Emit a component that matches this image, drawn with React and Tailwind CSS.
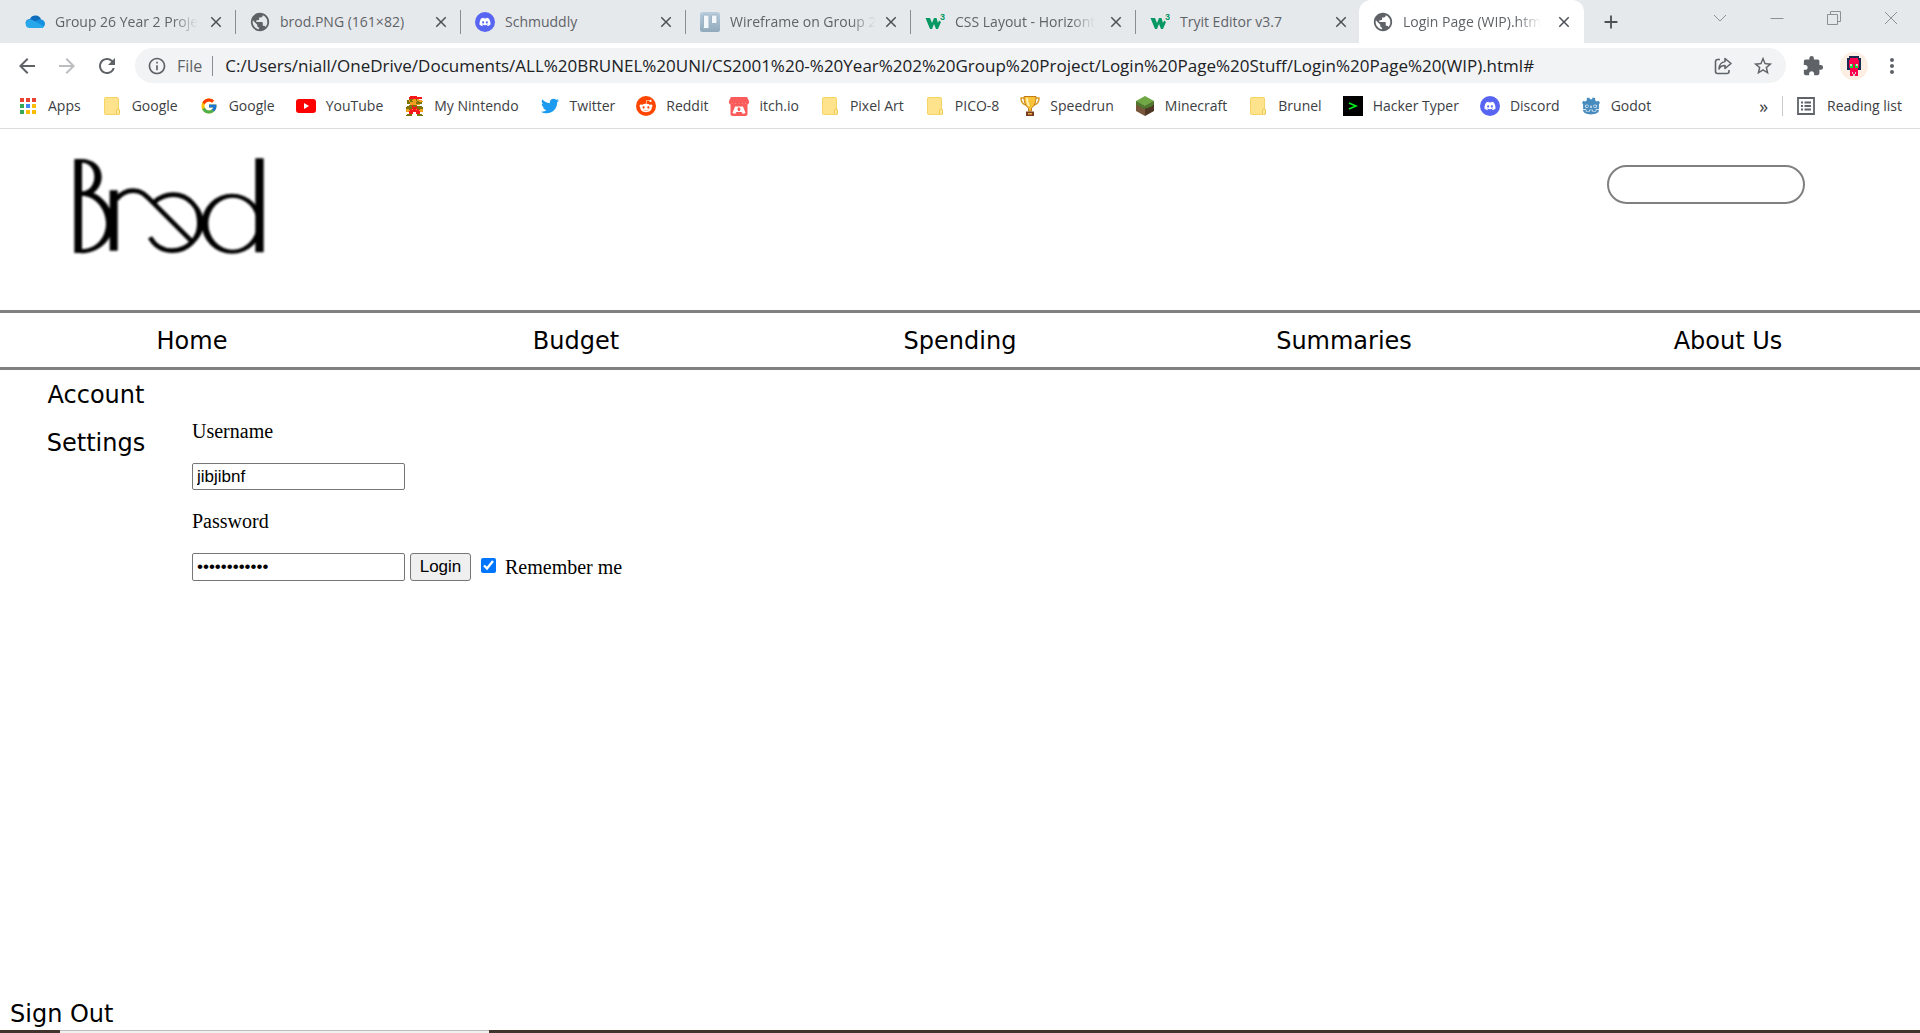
import React from "react";
import { FaDiscord, FaTwitter, FaRedditAlien } from "react-icons/fa";
import { FcGoogle } from "react-icons/fc";
import { SiGodotengine } from "react-icons/si";
import { MdPublic, MdExtension, MdMoreVert, MdStarBorder, MdArrowBack, MdArrowForward, MdRefresh, MdInfoOutline, MdClose, MdAdd } from "react-icons/md";

const Globe = () => <MdPublic className="size-[22px] shrink-0 text-[#5f6368]" />;

const Discord = () => (
  <span className="flex size-5 items-center justify-center rounded-full bg-[#5865f2]">
    <FaDiscord className="size-3 text-white" />
  </span>
);

const OneDrive = () => (
  <svg viewBox="0 0 20 13" className="h-[13px] w-5">
    <path d="M5 4C6 1 9 0 11.500 .5c2.500.5 4 2 4.500 4L10 9 1 9C0 7 1.500 4 5 4z" fill="#0f6cbd" />
    <path d="M15.500 4.500c2.500 0 4.500 1.700 4.500 4.200S18 13 16 13H4L9 7c2-1.500 4-2.500 6.500-2.500z" fill="#1490df" />
    <path d="M1 7c1-2.500 4-3.500 6.500-2L19 11.500C18.500 12.500 17 13 16 13H4.500C1.500 13 0 10 1 7z" fill="#28a8ea" />
  </svg>
);

const Trello = () => (
  <svg viewBox="0 0 20 20" className="size-5">
    <defs>
      <linearGradient id="board" x1="0" y1="0" x2="0" y2="1">
        <stop offset="0" stopColor="#b9cddd" />
        <stop offset="1" stopColor="#8fa9bb" />
      </linearGradient>
    </defs>
    <rect width="20" height="20" rx="2.500" fill="url(#board)" />
    <rect x="3.500" y="3" width="5.500" height="13.500" rx="1" fill="#f4f8fb" stroke="#9db2c4" />
    <rect x="11.500" y="3" width="5.500" height="8.500" rx="1" fill="#f4f8fb" stroke="#9db2c4" />
  </svg>
);

const W3 = () => (
  <svg viewBox="0 0 20 20" className="size-5">
    <path d="M.5 6H5l2 5 2-5h2.500l1.500 5 1-2.500L16 10l-3 7h-2l-2-5-2 5H5z" fill="#059862" />
    <text x="15" y="8" fontSize="9" fontWeight="700" fontFamily="Liberation Sans, sans-serif" fill="#059862">3</text>
  </svg>
);

const Folder = () => (
  <svg viewBox="0 0 16 18" className="h-[18px] w-4">
    <path d="M1.500.5h12a1 1 0 0 1 1 1V12l1 1v3.500a1 1 0 0 1-1 1h-13a1 1 0 0 1-1-1v-15a1 1 0 0 1 1-1z" fill="#ffe38c" stroke="#f5d365" />
    <path d="M12.500 17v-3.500a1.500 1.500 0 0 1 3 0V16q0 1.500-1.500 1.500" fill="#ffe9a3" stroke="#efc850" />
  </svg>
);

const appColors = ["#ea4335", "#ea4335", "#ea4335", "#34a853", "#4285f4", "#fbbc05", "#34a853", "#fbbc05", "#fbbc05"];
const Apps = () => (
  <span className="grid grid-cols-3 gap-0.5">
    {appColors.map((c, i) => (
      <span key={i} className="size-1" style={{ backgroundColor: c }} />
    ))}
  </span>
);

const YouTube = () => (
  <svg viewBox="0 0 20 14" className="h-3.5 w-5">
    <rect width="20" height="14" rx="3" fill="#f00" />
    <path d="M8 4l5 3-5 3z" fill="#fff" />
  </svg>
);

const PixelArt = ({ rows, colors, className }) => (
  <svg viewBox={`0 0 ${rows[0].length} ${rows.length}`} preserveAspectRatio="none" shapeRendering="crispEdges" className={className}>
    {rows.flatMap((row, y) =>
      [...row].map((ch, x) => (colors[ch] ? <rect key={`${x}-${y}`} x={x} y={y} width="1" height="1" fill={colors[ch]} /> : null))
    )}
  </svg>
);

const marioRows = [
  "...rrrrr....",
  "..rrrrrrrrr.",
  "..bbbssbs...",
  ".bsbsssbsss.",
  ".bsbbsssbsss",
  ".bbssssbbbb.",
  "...sssssss..",
  "..bbrbbb....",
  ".bbbrbbrbbb.",
  "bbbbrrrrbbbb",
  "ssbrsrrsrbss",
  "sssrrrrrrsss",
  "ssrrrrrrrrss",
  "..rrr..rrr..",
  ".bbb....bbb.",
  "bbbb....bbbb",
];
const Mario = () => <PixelArt rows={marioRows} colors={{ r: "#f8181c", b: "#7d7408", s: "#f0a020" }} className="h-5 w-[17px]" />;

const Reddit = () => (
  <span className="flex size-5 items-center justify-center rounded-full bg-[#ff4500]">
    <FaRedditAlien className="size-3.5 text-white" />
  </span>
);

const Itch = () => (
  <svg viewBox="0 0 20 19" className="h-[19px] w-5">
    <path d="M2 0h16l2 4v2q-1.500 2.500-3.300.5Q15 8.500 13.300 6.500 11.700 8.500 10 6.500 8.300 8.500 6.700 6.500 5 8.500 3.300 6.500 1.500 8.500 0 6V4z" fill="#fa5c5c" />
    <path d="M1.500 7h17v10q0 2-2 2h-13q-2 0-2-2z" fill="#fa5c5c" />
    <path d="M6 9.500h8l2.500 6.500-2.500 1-1.500-2h-5L6 17l-2.500-1z" fill="#fff" />
    <path d="M10 10l2.200 2.500H11V14H9v-1.500H7.800z" fill="#fa5c5c" />
  </svg>
);

const Trophy = () => (
  <svg viewBox="0 0 20 20" className="size-5">
    <path d="M4.500 2H1q0 6 5 7M15.500 2H19q0 6-5 7" fill="none" stroke="#d99a20" strokeWidth="1.500" />
    <path d="M4 .5h12q0 9-4.500 11.500V15h-3v-3Q4 9.500 4 .5z" fill="#fbc437" stroke="#c07c18" />
    <path d="M7 2q0 5 2 8" fill="none" stroke="#ffefb0" strokeWidth="2" />
    <path d="M6 15.500h8V20H6z" fill="#7a3b1d" />
    <path d="M8 17h4v1.500H8z" fill="#e8b04a" />
  </svg>
);

const Minecraft = () => (
  <svg viewBox="0 0 18 20" className="h-5 w-[18px]">
    <path d="M9 0l9 5-9 5-9-5z" fill="#6fa844" />
    <path d="M0 5l9 5v10l-9-5z" fill="#79553a" />
    <path d="M18 5l-9 5v10l9-5z" fill="#4f3625" />
    <path d="M0 5l9 5v3l-2-1v1l-2-2v1L3 9.500v1L0 8zM18 5l-9 5v2.500l2-.5v1l2-2 2 0 3-3z" fill="#4d7a2d" />
  </svg>
);

const HackerTyper = () => (
  <span className="flex size-5 items-center justify-center bg-black">
    <svg viewBox="0 0 10 8" className="h-2 w-2.5">
      <path d="M1 1l7 3-7 3" fill="none" stroke="#00f020" strokeWidth="1.800" />
    </svg>
  </span>
);

const Godot = () => <SiGodotengine className="size-[18px] text-[#478cbf]" />;

const avatarRows = [
  ".nnnnnnn.",
  "nnrrrrrnn",
  "nrrrrrrrn",
  "nrrrrrrrn",
  "nrwgrgwrn",
  "nrggrggrn",
  "nnrrrrrnn",
  "..rrrrr..",
  "..rwrwr..",
  "..rrwrr..",
];

const tabs = [
  { icon: <OneDrive />, label: "Group 26 Year 2 Proje", fade: true },
  { icon: <Globe />, label: "brod.PNG (161×82)" },
  { icon: <Discord />, label: "Schmuddly" },
  { icon: <Trello />, label: "Wireframe on Group 2", fade: true },
  { icon: <W3 />, label: "CSS Layout - Horizont", fade: true },
  { icon: <W3 />, label: "Tryit Editor v3.7" },
  { icon: <Globe />, label: "Login Page (WIP).htm", fade: true, active: true },
];

const bookmarks = [
  [<Apps />, "Apps"],
  [<Folder />, "Google"],
  [<FcGoogle className="size-[18px]" />, "Google"],
  [<YouTube />, "YouTube"],
  [<Mario />, "My Nintendo"],
  [<FaTwitter className="size-[18px] text-[#1d9bf0]" />, "Twitter"],
  [<Reddit />, "Reddit"],
  [<Itch />, "itch.io"],
  [<Folder />, "Pixel Art"],
  [<Folder />, "PICO-8"],
  [<Trophy />, "Speedrun"],
  [<Minecraft />, "Minecraft"],
  [<Folder />, "Brunel"],
  [<HackerTyper />, "Hacker Typer"],
  [<Discord />, "Discord"],
  [<Godot />, "Godot"],
];

function Tab({ icon, label, fade, active }) {
  return (
    <div className={`flex w-[225px] items-center pr-[11px] pl-3.5 ${active ? "-ml-0.5 rounded-t-xl bg-white" : ""}`}>
      <button type="button" className="flex min-w-0 flex-1 items-center gap-2.5 text-left">
        <span className="flex size-5 shrink-0 items-center justify-center">{icon}</span>
        <span
          className={`whitespace-nowrap text-[#5f6368] ${fade ? "[mask-image:linear-gradient(to_right,black_82%,transparent)]" : ""}`}
        >
          {label}
        </span>
      </button>
      <button type="button" aria-label={`Close ${label}`} className="shrink-0">
        <MdClose className="size-[18px] text-[#4d5156]" />
      </button>
    </div>
  );
}

function TabStrip() {
  return (
    <div className="flex h-[43px] bg-[#e6e9ec] pl-[11px] text-sm">
      {tabs.map((t, i) => (
        <React.Fragment key={t.label}>
          <Tab {...t} />
          {i < 5 && <span className="z-10 -ml-px h-6 w-px self-center bg-[#8a8d91]" />}
        </React.Fragment>
      ))}
      <button type="button" aria-label="New tab" className="ml-4 self-center">
        <MdAdd className="size-[22px] text-[#4d5156]" />
      </button>
      <div className="ml-auto flex items-center pr-px pb-2">
        {[
          ["Search tabs", "M1 4l6 6 6-6"],
          ["Minimize", "M.5 7.500h13"],
          ["Restore", "M.5 3.500h10v10H.5zM3.500 3.500v-3h10v10h-3"],
          ["Close window", "M1 1l12 12M13 1L1 13"],
        ].map(([name, d]) => (
          <button key={name} type="button" aria-label={name} className="flex w-[57px] justify-center">
            <svg viewBox="0 0 14 14" className="size-3.5" fill="none" stroke="#8d9094">
              <path d={d} />
            </svg>
          </button>
        ))}
      </div>
    </div>
  );
}

function Toolbar() {
  return (
    <div className="flex h-[45px] items-center bg-white pr-4 pl-[15px] text-[#5f6368]">
      <button type="button" aria-label="Back"><MdArrowBack className="size-6" /></button>
      <button type="button" aria-label="Forward" className="ml-4"><MdArrowForward className="size-6 text-[#bbbdc0]" /></button>
      <button type="button" aria-label="Reload" className="ml-4"><MdRefresh className="size-6" /></button>
      <div className="ml-4 flex h-[35px] flex-1 items-center rounded-full bg-[#f1f3f4] pr-3 pl-3">
        <MdInfoOutline className="size-5 shrink-0" />
        <span className="ml-2.5 text-base">File</span>
        <span className="ml-2.5 h-5 w-px bg-[#8a8d91]" />
        <input
          aria-label="Address"
          className="ml-3 min-w-0 flex-1 bg-transparent text-[17px] text-[#202124] outline-none"
          defaultValue="C:/Users/niall/OneDrive/Documents/ALL%20BRUNEL%20UNI/CS2001%20-%20Year%202%20Group%20Project/Login%20Page%20Stuff/Login%20Page%20(WIP).html#"
        />
        <button type="button" aria-label="Share">
          <svg viewBox="0 0 18 18" className="size-[18px]" fill="none" stroke="currentColor" strokeWidth="1.600" strokeLinejoin="round">
            <path d="M6 2.500H3.500a2 2 0 0 0-2 2v10a2 2 0 0 0 2 2h9.500a2 2 0 0 0 2-2V13" />
            <path d="M11 1.500L17 6.500l-6 5V8.500C8 8.500 6 9.500 5 12 5 8 7.500 5 11 4.500z" />
          </svg>
        </button>
        <button type="button" aria-label="Bookmark this page" className="ml-5"><MdStarBorder className="size-[22px]" /></button>
      </div>
      <button type="button" aria-label="Extensions" className="ml-4"><MdExtension className="size-[22px]" /></button>
      <button type="button" aria-label="Profile" className="ml-4 flex size-7 items-center justify-center rounded-full bg-[#fdeee4]">
        <PixelArt rows={avatarRows} colors={{ n: "#1d2b53", r: "#ff004d", g: "#00e436", w: "#d8c8d0" }} className="h-5 w-3.5" />
      </button>
      <button type="button" aria-label="Menu" className="ml-3"><MdMoreVert className="size-6" /></button>
    </div>
  );
}

function BookmarksBar() {
  return (
    <div className="flex h-[41px] items-center border-b border-[#dadce0] bg-white pb-1 pr-[18px] pl-[18px] text-sm whitespace-nowrap text-[#3c4043]">
      <div className="flex items-center gap-[21px]">
        {bookmarks.map(([icon, label], i) => (
          <a key={i} href="#" className="flex items-center gap-2.5">
            <span className="flex size-5 shrink-0 items-center justify-center">{icon}</span>
            {label}
          </a>
        ))}
      </div>
      <button type="button" aria-label="More bookmarks" className="ml-auto text-lg">»</button>
      <span className="mx-3.5 h-5 w-px bg-[#c8cacd]" />
      <button type="button" className="flex items-center gap-3">
        <svg viewBox="0 0 18 18" className="size-[18px]" fill="none" stroke="#5f6368" strokeWidth="1.800">
          <path d="M1 1h16v16H1zM4 5.500h2M4 9h2M4 12.500h2M7.500 5.500H14M7.500 9H14M7.500 12.500H14" />
        </svg>
        Reading list
      </button>
    </div>
  );
}

const BrodLogo = () => (
  <svg role="img" aria-label="Brod" viewBox="216 78 588 300" className="h-[100px] w-[196px] blur-[1px]">
    <path d="M226 87H249V369H226z" />
    <path d="M240 87C285 85 308 110 308 140 308 165 295 182 278 192L248 196V184C270 184 286 165 286 140 286 115 270 98 248 98z" />
    <path d="M278 187C315 200 343 240 343 278 343 330 300 370 245 370V358C295 358 321 320 321 280 321 240 290 197 248 197V186z" />
    <path d="M332 181H356V362H332zM769 85H794V367H769z" />
    <g fill="none" stroke="#000" strokeWidth="14">
      <path d="M352 208C368 188 382 182 402 182 430 182 440 196 462 218L576 332" />
      <path d="M466 216C485 200 500 194 522 194 570 194 603 235 603 277 603 325 565 362 520 362 492 362 468 348 453 322" />
    </g>
    <path d="M560 200C600 220 614 250 614 278S600 335 562 355C582 335 594 310 594 278S582 220 560 200z" />
    <path fillRule="evenodd" d="M608 281A91 90 0 1 1 790 281A91 90 0 1 1 608 281zM628 281A73 78 0 1 0 774 281A73 78 0 1 0 628 281z" />
  </svg>
);

function SitePage() {
  const field = "w-[213px] rounded-[2px] border border-[#767676] bg-white px-1 font-['Liberation_Sans',sans-serif] text-[17px] text-black";
  return (
    <main className="flex flex-1 flex-col bg-white text-2xl text-black font-['DejaVu_Sans',sans-serif]">
      <header className="flex h-[181px] items-start justify-between pt-[27px] pr-[115px] pl-[71px]">
        <BrodLogo />
        <input aria-label="Search" type="search" className="mt-[9px] h-[39px] w-[198px] rounded-full border-2 border-[#808080] px-4 text-base" />
      </header>
      <nav className="grid h-[60px] grid-cols-5 items-center border-y-3 border-[#808080] pt-0.5 text-center">
        {["Home", "Budget", "Spending", "Summaries", "About Us"].map((n) => (
          <a key={n} href="#">{n}</a>
        ))}
      </nav>
      <div className="flex flex-1">
        <aside className="flex w-[10%] flex-col text-center">
          <a href="#" className="pt-[9px] leading-8">Account</a>
          <a href="#" className="pt-4 leading-8">Settings</a>
          <a href="#" className="mt-auto pl-2.5 text-left leading-8">Sign Out</a>
        </aside>
        <form className="pt-[49px] font-['Liberation_Serif',serif] text-xl leading-6" onSubmit={(e) => e.preventDefault()}>
          <label htmlFor="username" className="block">Username</label>
          <input id="username" type="text" defaultValue="jibjibnf" className={`mt-5 block h-[27px] ${field}`} />
          <label htmlFor="password" className="mt-[19px] block">Password</label>
          <div className="mt-5 flex items-center">
            <input id="password" type="password" defaultValue="abcdefghijkl" className={`h-7 ${field}`} />
            <button type="submit" className="ml-[5px] h-7 w-[61px] rounded-[3px] border border-[#767676] bg-[#efefef] font-['Liberation_Sans',sans-serif] text-[17px]">Login</button>
            <label className="ml-2.5 flex items-center gap-[9px]">
              <input type="checkbox" defaultChecked className="mb-1 size-[15px] accent-[#0075ff]" />
              Remember me
            </label>
          </div>
        </form>
      </div>
    </main>
  );
}

export default function App() {
  return (
    <div className="flex min-h-screen flex-col bg-white font-['Open_Sans',sans-serif]">
      <TabStrip />
      <Toolbar />
      <BookmarksBar />
      <SitePage />
      <div className="flex h-[3px] bg-[#43332d]">
        <div className="ml-[60px] w-[429px] border-t border-[#bdbdbd] bg-[#f0f0f0]" />
      </div>
    </div>
  );
}
